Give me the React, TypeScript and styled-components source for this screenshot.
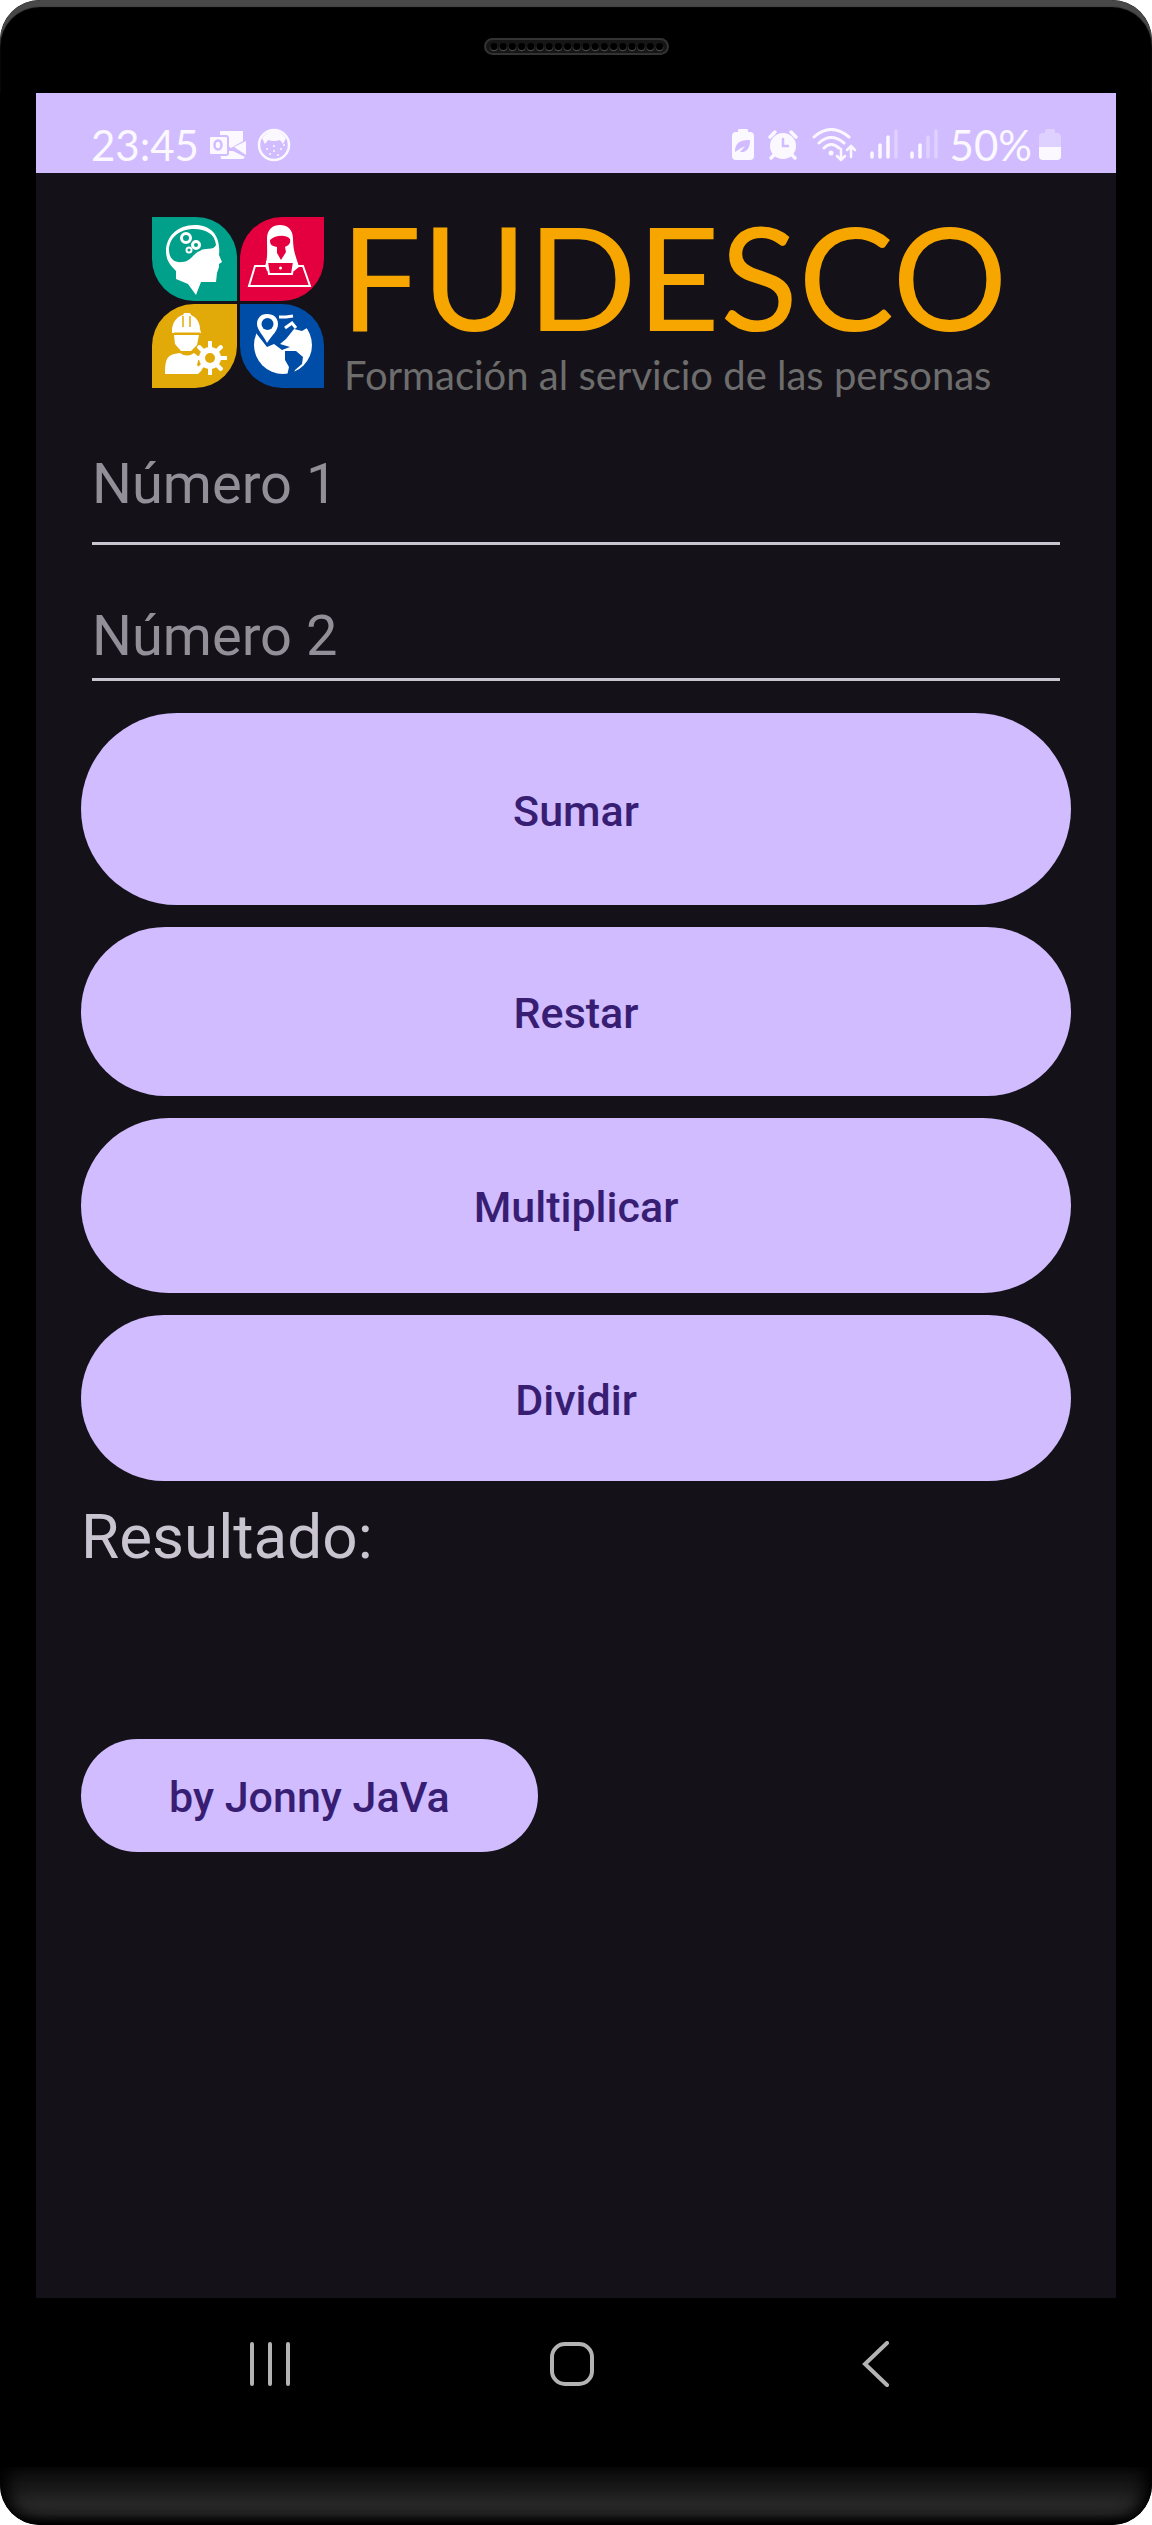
import React, { useState } from "react";
import styled, { createGlobalStyle } from "styled-components";

const GlobalStyle = createGlobalStyle`
  * { box-sizing: border-box; }
  body { margin: 0; background: #fff; font-family: Roboto, "Liberation Sans", sans-serif; }
`;

const Device = styled.div`
  display: flex;
  flex-direction: column;
  min-height: 100vh;
  border-radius: 40px;
  overflow: hidden;
  background: #000;
`;

const TopBezel = styled.div`
  flex: none;
  display: flex;
  justify-content: center;
  height: 93px;
  padding-top: 38px;
  border-radius: 40px 40px 0 0;
  box-shadow: inset 0 7px 1px #484848;
`;

const Speaker = styled.svg`
  display: block;
  width: 185px;
  height: 17px;
`;

const Screen = styled.div`
  flex: 1;
  display: flex;
  flex-direction: column;
  margin: 0 36px;
  background: #141218;
`;

const StatusBar = styled.header`
  display: flex;
  align-items: flex-end;
  justify-content: space-between;
  height: 80px;
  padding: 0 55px 4px;
  background: #d0bcff;
  color: #fcf8ff;
`;

const StatusGroup = styled.div<{ $gap: number }>`
  display: flex;
  align-items: center;
  gap: ${(p) => p.$gap}px;
`;

const StatusText = styled.span`
  font-family: Lato, Roboto, sans-serif;
  font-size: 42px;
  line-height: 48px;
`;

const StatusIcon = styled.svg`
  display: block;
  height: 34px;
`;

const Content = styled.main`
  flex: 1;
  display: flex;
  flex-direction: column;
  padding: 44px 45px 0;
`;

const Brand = styled.div`
  display: flex;
  justify-content: center;
  gap: 16px;
  height: 182px;
`;

const Emblem = styled.svg`
  flex: none;
  display: block;
  width: 172px;
  height: 172px;
`;

const BrandText = styled.div`
  display: flex;
  flex-direction: column;
  width: 660px;
  white-space: nowrap;
  font-family: Lato, Roboto, sans-serif;
`;

const BrandName = styled.span`
  font-size: 144px;
  line-height: 118px;
  color: #f7a600;
`;

const Tagline = styled.span`
  padding-left: 4px;
  font-size: 40px;
  line-height: 80px;
  color: #6e6d6d;
`;

const Field = styled.input<{ $height: number; $top: number }>`
  height: ${(p) => p.$height}px;
  margin: 0 11px;
  padding: ${(p) => p.$top}px 0 0;
  border: 0;
  border-bottom: 3px solid #cac4d0;
  border-radius: 0;
  outline: 0;
  background: transparent;
  color: #e6e0e9;
  font: 400 56px/66px Roboto, sans-serif;
  &::placeholder { color: #938f99; opacity: 1; }
`;

const Form = styled.form`
  display: flex;
  flex-direction: column;
`;

const Actions = styled.div`
  display: flex;
  flex-direction: column;
  gap: 22px;
  margin-top: 32px;
`;

const PillButton = styled.button<{ $height: number; $fit?: boolean }>`
  align-self: ${(p) => (p.$fit ? "flex-start" : "stretch")};
  height: ${(p) => p.$height}px;
  padding: 3px 88px 0;
  border: 0;
  border-radius: 96px;
  background: #d0bcff;
  color: #381e72;
  font: 500 43px/50px Roboto, sans-serif;
  cursor: pointer;
`;

const Result = styled.output`
  height: 258px;
  padding-top: 19px;
  font-size: 62px;
  line-height: 74px;
  color: #cac4d0;
`;

const NavBar = styled.nav`
  flex: none;
  display: flex;
  height: 132px;
  justify-content: space-between;
  align-items: center;
  padding: 0 206px;
`;

const NavButton = styled.button`
  display: flex;
  padding: 0;
  border: 0;
  background: transparent;
  cursor: pointer;
`;

const Chin = styled.div`
  flex: none;
  height: 58px;
  margin-top: 37px;
  background: linear-gradient(#0c0c0c, #181818 35%, #272727 64%, #222 80%, #000);
  border-radius: 0 0 40px 40px;
  box-shadow: inset 12px 0 16px -4px #000, inset -12px 0 16px -4px #000;
`;

function SpeakerGrille() {
  return (
    <Speaker viewBox="0 0 185 17" aria-hidden="true">
      <rect x="1" y="1" width="183" height="15" rx="7.5" fill="#161616" stroke="#333" strokeWidth="2" />
      {Array.from({ length: 19 }, (_, i) => (
        <g key={i}>
          <circle cx={10 + i * 9.2} cy="9.500" r="3.8" fill="#484848" />
          <circle cx={10 + i * 9.2} cy="8.500" r="3.6" fill="#000" />
        </g>
      ))}
    </Speaker>
  );
}

function FudescoEmblem() {
  return (
    <Emblem viewBox="0 0 172 172" role="img" aria-label="FUDESCO">
      <path d="M0 0H44A41 41 0 0 1 85 41V84H42A42 42 0 0 1 0 42Z" fill="#00a08a" />
      <path d="M172 0H130A42 42 0 0 0 88 42V84H130A42 42 0 0 0 172 42Z" fill="#e4003f" />
      <path d="M0 171V129A42 42 0 0 1 42 87H85V129A42 42 0 0 1 43 171Z" fill="#e2aa08" />
      <path d="M172 171V129A42 42 0 0 0 130 87H88V129A42 42 0 0 0 130 171Z" fill="#004da8" />
      <g>
        <path d="M43 8C25 8 14 20 14 34C14 44 19 49 24 54V62L36 67L44 78L49 65H64L65 56L67 50V47L70 45L67 38C69 20 60 8 43 8Z" fill="#fff" />
        <path d="M42 12C26 12 17 22 17 33C17 41 22 46 30 45C39 45 41 36 48 34C52 30 62 34 64 28C63 17 54 12 42 12Z" fill="#00a08a" />
        <circle cx="34" cy="21" r="4.5" fill="none" stroke="#fff" strokeWidth="3" />
        <circle cx="44" cy="28" r="3.5" fill="none" stroke="#fff" strokeWidth="3" />
        <circle cx="37" cy="33" r="2.5" fill="none" stroke="#fff" strokeWidth="2" />
      </g>
      <g fill="#fff">
        <path d="M115 22C115 12 121 8 128 8S141 12 141 22C141 35 145 42 147 50L142 54H115L113 49C116 41 115 34 115 22Z" />
        <path d="M118 23C123 18 134 17 138 22C139 27 136 29 133 30L134 35L129 43L125 36V30C119 29 118 27 118 23Z" fill="#e4003f" />
        <path d="M115 49H103L97 69H158L151 49H142" fill="none" stroke="#fff" strokeWidth="2" />
        <path d="M115 45H142L140 57H117Z" fill="#e4003f" stroke="#fff" strokeWidth="2" />
        <circle cx="128.500" cy="51" r="1.500" />
      </g>
      <g fill="#fff">
        <path d="M20 112C21 104 26 99 31 98L32 96H38L39 98C44 100 48 105 48 112L49 116H20Z" />
        <path d="M31 99V110M38 99V110" stroke="#e2aa08" strokeWidth="1.500" />
        <path d="M22 118H47L45 128L39 134H29L23 127Z" />
        <path d="M13 157C13 145 14 139 22 137L28 136Q35 141 42 136L47 140L45 148L50 153L46 157Z" />
        <path d="M22 116H48" stroke="#e2aa08" strokeWidth="1" />
        {Array.from({ length: 8 }, (_, i) => (
          <rect key={i} x="56" y="124" width="4" height="34" rx="1" transform={`rotate(${i * 45} 58 141)`} />
        ))}
        <circle cx="58" cy="141" r="11" />
        <circle cx="58" cy="141" r="5" fill="#e2aa08" />
      </g>
      <g fill="#fff">
        <circle cx="131" cy="128" r="29" />
        <path d="M98 90L104 116L115 130L122 127L130 133L138 130L128 127L134 122L142 112L150 114L160 108L142 92Z" fill="#004da8" />
        <path d="M133 134L144 134L151 140L150 147L143 153L141 159H135L137 150L133 143Z" fill="#004da8" />
        <path d="M115 97C108 97 105 102 105 107C105 113 112 119 115 126C120 118 126 114 126 107C126 101 122 97 115 97Z" />
        <circle cx="115.500" cy="107" r="6" fill="#004da8" />
        <path d="M127 100H134L141 99M133 111L140 106L144 111" fill="none" stroke="#fff" strokeWidth="3" />
      </g>
    </Emblem>
  );
}

function OutlookIcon() {
  return (
    <StatusIcon viewBox="0 0 38 34" width="38" aria-hidden="true">
      <path d="M11 3H34V13L22 20L11 13Z" fill="currentColor" />
      <path d="M25 19L37 13V27Z" fill="currentColor" />
      <path d="M11 23H24L36 29L34 31H12Z" fill="currentColor" />
      <rect x="0" y="8" width="19" height="19" rx="2" fill="currentColor" stroke="#d0bcff" strokeWidth="2" />
      <ellipse cx="9" cy="17" rx="3.500" ry="4.500" fill="none" stroke="#d0bcff" strokeWidth="2.500" />
    </StatusIcon>
  );
}

function CatIcon() {
  return (
    <StatusIcon viewBox="0 0 34 34" width="34" aria-hidden="true">
      <circle cx="17" cy="17" r="15" fill="none" stroke="currentColor" strokeWidth="2.500" />
      <path d="M5 10Q17 -5 29 10L26 16L23 12Q17 14 11 12L8 16Z" fill="currentColor" />
      {[[10, 21], [17, 18], [24, 21], [13, 26], [21, 27], [27, 17], [17, 23]].map(([x, y]) => (
        <circle key={x + "-" + y} cx={x} cy={y} r="1" fill="currentColor" />
      ))}
    </StatusIcon>
  );
}

function SaverIcon() {
  return (
    <StatusIcon viewBox="0 0 22 34" width="22" aria-hidden="true">
      <path d="M6 4V2Q6 1 8 1H14Q16 1 16 2V4H18Q22 4 22 8V28Q22 32 18 32H4Q0 32 0 28V8Q0 4 4 4Z" fill="currentColor" />
      <path d="M3 22Q4 11 18 12Q18 25 8 24L13 18Q9 20 3 24Z" fill="#d0bcff" />
    </StatusIcon>
  );
}

function AlarmIcon() {
  return (
    <StatusIcon viewBox="0 0 30 34" width="34" aria-hidden="true">
      <path d="M2 9L7 4M28 9L23 4M6 27L3 30M24 27L27 30" stroke="currentColor" strokeWidth="3.500" strokeLinecap="round" />
      <circle cx="15" cy="18" r="13" fill="currentColor" />
      <path d="M15 11V18H20" fill="none" stroke="#d0bcff" strokeWidth="2.500" strokeLinecap="round" />
    </StatusIcon>
  );
}

function WifiIcon() {
  return (
    <StatusIcon viewBox="0 0 46 34" width="46" aria-hidden="true">
      <path d="M2 9Q19 -6 37 9M7 15Q19 4 32 15M12 20Q19 13 27 20" fill="none" stroke="currentColor" strokeWidth="3" strokeLinecap="round" />
      <circle cx="19" cy="25" r="2.500" fill="currentColor" />
      <path d="M29 21V31M25 28L29 32L33 28M39 29V19M35 22L39 18L43 22" fill="none" stroke="currentColor" strokeWidth="2.500" strokeLinecap="round" />
    </StatusIcon>
  );
}

function SignalIcon({ bars }: { bars: number }) {
  return (
    <StatusIcon viewBox="0 0 28 34" width="28" aria-hidden="true">
      {[25, 17, 9, 3].map((top, i) => (
        <path key={top} d={`M${2 + i * 8} ${top}V29`} stroke="currentColor" strokeWidth="3.500" strokeLinecap="round" opacity={i < bars ? 1 : 0.35} />
      ))}
    </StatusIcon>
  );
}

function BatteryIcon() {
  return (
    <StatusIcon viewBox="0 0 22 34" width="22" aria-hidden="true">
      <path d="M6 5V3Q6 1 8 1H14Q16 1 16 3V5H18Q22 5 22 9V19H0V9Q0 5 4 5Z" fill="currentColor" opacity="0.35" />
      <path d="M0 19H22V28Q22 32 18 32H4Q0 32 0 28Z" fill="currentColor" />
    </StatusIcon>
  );
}

const operations = [
  { label: "Sumar", height: 192, run: (a: number, b: number) => a + b },
  { label: "Restar", height: 169, run: (a: number, b: number) => a - b },
  { label: "Multiplicar", height: 175, run: (a: number, b: number) => a * b },
  { label: "Dividir", height: 166, run: (a: number, b: number) => a / b },
];

export default function App() {
  const [first, setFirst] = useState("");
  const [second, setSecond] = useState("");
  const [result, setResult] = useState("");

  return (
    <>
      <GlobalStyle />
      <Device>
        <TopBezel>
          <SpeakerGrille />
        </TopBezel>
        <Screen>
          <StatusBar>
            <StatusGroup $gap={10}>
              <StatusText>23:45</StatusText>
              <OutlookIcon />
              <CatIcon />
            </StatusGroup>
            <StatusGroup $gap={12}>
              <SaverIcon />
              <AlarmIcon />
              <WifiIcon />
              <SignalIcon bars={3} />
              <SignalIcon bars={2} />
              <StatusGroup $gap={7}>
                <StatusText>50%</StatusText>
                <BatteryIcon />
              </StatusGroup>
            </StatusGroup>
          </StatusBar>
          <Content>
            <Brand>
              <FudescoEmblem />
              <BrandText>
                <BrandName>FUDESCO</BrandName>
                <Tagline>Formación al servicio de las personas</Tagline>
              </BrandText>
            </Brand>
            <Form onSubmit={(e) => e.preventDefault()}>
              <Field $height={146} $top={26} inputMode="decimal" placeholder="Número 1" aria-label="Número 1" value={first} onChange={(e) => setFirst(e.target.value)} />
              <Field $height={136} $top={48} inputMode="decimal" placeholder="Número 2" aria-label="Número 2" value={second} onChange={(e) => setSecond(e.target.value)} />
              <Actions>
                {operations.map((op) => (
                  <PillButton key={op.label} type="button" $height={op.height} onClick={() => setResult(String(op.run(Number(first), Number(second))))}>
                    {op.label}
                  </PillButton>
                ))}
              </Actions>
              <Result>Resultado: {result}</Result>
            </Form>
            <PillButton type="button" $height={113} $fit>
              by Jonny JaVa
            </PillButton>
          </Content>
        </Screen>
        <NavBar>
          <NavButton aria-label="Recientes">
            <svg width="88" height="46" viewBox="0 0 88 46">
              <path d="M46 3V43M64 3V43M82 3V43" stroke="#b3b3b3" strokeWidth="4" strokeLinecap="round" />
            </svg>
          </NavButton>
          <NavButton aria-label="Inicio">
            <svg width="46" height="46" viewBox="0 0 46 46">
              <rect x="3" y="3" width="40" height="40" rx="13" fill="none" stroke="#b3b3b3" strokeWidth="4" />
            </svg>
          </NavButton>
          <NavButton aria-label="Atrás">
            <svg width="96" height="46" viewBox="0 0 96 46">
              <path d="M37 2L15 23L37 44" fill="none" stroke="#b3b3b3" strokeWidth="4" strokeLinecap="round" />
            </svg>
          </NavButton>
        </NavBar>
        <Chin />
      </Device>
    </>
  );
}
